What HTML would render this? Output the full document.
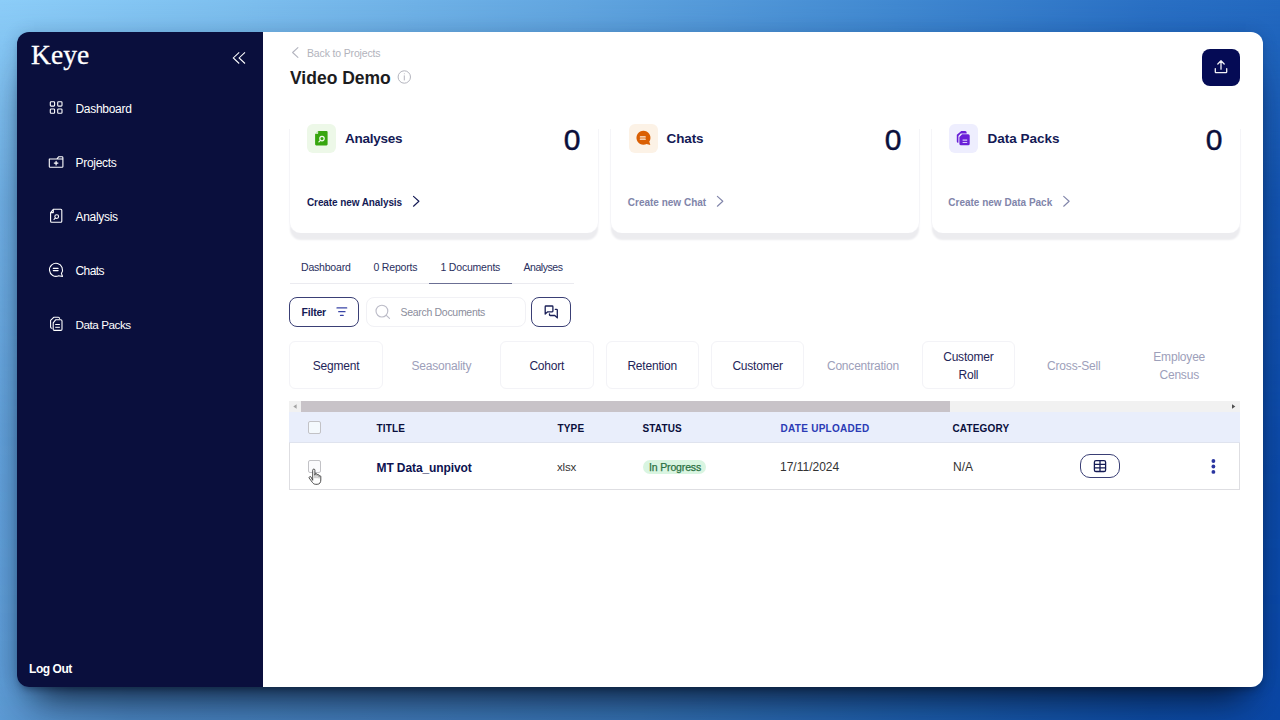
<!DOCTYPE html>
<html lang="en">
<head>
<meta charset="utf-8">
<title>Keye - Video Demo</title>
<style>
*{box-sizing:border-box;margin:0;padding:0}
html,body{width:1280px;height:720px;overflow:hidden}
body{position:relative;font-family:"Liberation Sans",sans-serif;background:#3c7fc9;color:#0a0f3c}
.abs{position:absolute}
.t{position:absolute;white-space:pre;line-height:1}
svg{position:absolute;overflow:visible}

/* wallpaper */
.bg-a{left:0;top:0;width:1280px;height:720px;background:linear-gradient(90deg,#8ccdf8 0%,#7cbeee 20%,#62a6e0 45%,#4189d1 70%,#2a70c4 90%,#2369c0 100%)}
.bg-b{left:0;top:0;width:1280px;height:720px;background:linear-gradient(90deg,#5c9ad4 0%,#5591cb 3%,#4a85c0 10%,#427bb8 28%,#3470b0 50%,#1c5caa 72%,#0d4ba3 90%,#0a47a6 100%);-webkit-mask-image:linear-gradient(180deg,rgba(0,0,0,0) 0%,rgba(0,0,0,.15) 6%,rgba(0,0,0,.62) 28%,rgba(0,0,0,.88) 60%,#000 100%);mask-image:linear-gradient(180deg,rgba(0,0,0,0) 0%,rgba(0,0,0,.15) 6%,rgba(0,0,0,.62) 28%,rgba(0,0,0,.88) 60%,#000 100%)}

/* window */
.win-shadow{left:17px;top:32px;width:1246px;height:655px;border-radius:12px;box-shadow:0 27px 36px -17px rgba(5,15,35,.88),0 5px 6px -3px rgba(8,20,45,.38),0 0 16px 0 rgba(10,30,70,.16)}
.sidebar{left:17px;top:32px;width:246px;height:655px;background:#0a0f3d;border-radius:12px 0 0 12px}
.main{left:263px;top:32px;width:1000px;height:655px;background:#fff;border-radius:0 12px 12px 0}

/* sidebar */
.logo{font-family:"Liberation Serif",serif;font-size:27.5px;color:#fff;left:31px;top:41px;letter-spacing:.1px;-webkit-text-stroke:.3px #fff}
.nav{font-size:12px;color:#fff;left:75.5px;letter-spacing:-.3px}
.logout{font-size:12px;font-weight:700;color:#fff;left:29px;top:663px;letter-spacing:-.45px}

/* header */
.back{font-size:10.5px;color:#b2b3bc;left:307px;top:48px;letter-spacing:-.15px}
.h1{font-size:17.5px;font-weight:700;color:#1c1c1e;left:290px;top:70px}
.upload{left:1202px;top:49px;width:38px;height:37px;border-radius:8px;background:#050b55}

/* cards */
.card{top:129px;width:310px;height:103.5px;background:#fff;border-radius:0 0 12px 12px;border-left:1px solid #f5f5f8;border-right:1px solid #f5f5f8;box-shadow:0 8px 2px -1px #ececef}
.ibox{top:123.5px;width:29px;height:29px;border-radius:6px}
.ctitle{font-size:13.5px;font-weight:700;color:#141a55;top:132.3px;letter-spacing:-.25px}
.cnum{font-size:30px;color:#0a0f3c;top:125.2px;-webkit-text-stroke:.45px #0a0f3c}
.clink{font-size:10px;font-weight:700;top:197.8px;color:#141a55}
.clink.off{color:#8185aa}

/* tabs */
.tab{font-size:10.5px;color:#2a2f5e;top:262.4px;letter-spacing:-.2px}
.tabline{left:290px;top:283px;width:284px;height:1px;background:#ebebf0}
.tabactive{left:428.5px;top:282.5px;width:83.5px;height:1.5px;background:#6b6f94}

/* toolbar */
.btn{border:1px solid #3a3f75;border-radius:8px;background:#fff}
.filtertxt{font-size:10.5px;font-weight:700;color:#141a55;left:301.5px;top:307.1px;letter-spacing:-.2px}
.search{left:365.5px;top:297px;width:160px;height:29.5px;border:1px solid #f1f1f5;border-radius:8px}
.searchtxt{font-size:10.5px;color:#8b8d9c;left:400.5px;top:307.4px;letter-spacing:-.3px}

/* chips */
.chip{top:341px;width:93.5px;height:47.5px;border:1px solid #f3f3f7;border-radius:6px}
.chiptxt{position:absolute;font-size:12px;color:#1f2559;text-align:center;width:105.4px;line-height:17.5px;letter-spacing:-.2px}
.chiptxt.one{top:358px}
.chiptxt.two{top:349px}
.chiptxt.off{color:#9da0ba}

/* scrollbar */
.sb-track{left:289px;top:401.3px;width:950.5px;height:10.5px;background:#f1f1f1}
.sb-thumb{left:301.3px;top:401.3px;width:648.7px;height:10.5px;background:#c8c3c8}

/* table */
.thead{left:289px;top:411.5px;width:950.5px;height:31px;background:#e9eefb;border-bottom:1px solid #dfe3ee}
.trow{left:289px;top:442.5px;width:950.5px;height:47px;border:1px solid #dedee2;border-top:none;background:#fff}
.th{font-size:10px;font-weight:700;color:#0a0f3c;top:424px;letter-spacing:.15px}
.td{font-size:12px;color:#333;top:461px}
.cb{width:13px;height:13px;border:1px solid #c2c2c6;border-radius:2px;background:#fbfbfd;left:308.2px}
.badge{left:643px;top:459.5px;width:63.3px;height:14.8px;border-radius:7.4px;background:#d9f5e1}
.badgetxt{font-size:10.5px;color:#2b7042;left:649px;top:462.4px;letter-spacing:-.15px;-webkit-text-stroke:.25px #2b7042}
.pill{left:1080px;top:454px;width:40px;height:24px;border:1px solid #3a3f75;border-radius:10px;background:#fff}
</style>
</head>
<body>
<!-- wallpaper -->
<div class="abs bg-a"></div>
<div class="abs bg-b"></div>

<!-- window -->
<div class="abs win-shadow"></div>
<div class="abs sidebar"></div>
<div class="abs main"></div>

<!-- sidebar content -->
<div class="t logo">Keye</div>
<div class="t nav" style="top:103px">Dashboard</div>
<div class="t nav" style="top:157px">Projects</div>
<div class="t nav" style="top:211px">Analysis</div>
<div class="t nav" style="top:265px;letter-spacing:-.6px">Chats</div>
<div class="t nav" style="top:319px;font-size:11.7px;letter-spacing:-.45px">Data Packs</div>
<div class="t logout">Log Out</div>
<!-- sidebar icons -->
<svg style="left:230px;top:50px" width="18" height="16" viewBox="230 50 18 16" fill="none" stroke="#fff" stroke-width="1.05" stroke-linecap="butt" stroke-linejoin="miter"><path d="M239.200 52.300 233.300 57.900l5.900 5.600M245 52.300l-5.900 5.600 5.900 5.600"/></svg>
<svg style="left:48px;top:100px" width="16" height="16" viewBox="48 100 16 16" fill="none" stroke="#fff" stroke-width="1.1"><rect x="50.3" y="101.8" width="4.3" height="4.3" rx=".8"/><rect x="57.7" y="101.8" width="4.3" height="4.3" rx=".8"/><rect x="50.3" y="109" width="4.3" height="4.3" rx=".8"/><rect x="57.7" y="109" width="4.3" height="4.3" rx=".8"/></svg>
<svg style="left:47px;top:154px" width="18" height="16" viewBox="47 154 18 16" fill="none" stroke="#fff" stroke-width="1.1" stroke-linejoin="round" stroke-linecap="round"><path d="M49.3 159h13.6v7.4a.9.9 0 0 1-.9.9H50.200a.9.9 0 0 1-.9-.9zM56.800 159l1.800-2.200h3.400a.9.9 0 0 1 .9.900V159"/><path d="M56.100 161.300v3.600M54.300 163.100h3.600" stroke-width="1.2"/></svg>
<svg style="left:48px;top:207px" width="16" height="18" viewBox="48 207 16 18" fill="none" stroke="#fff" stroke-width="1.1" stroke-linejoin="round" stroke-linecap="round"><path d="M53.300 209.300h7.500a1 1 0 0 1 1 1v11a1 1 0 0 1-1 1h-9.200a1 1 0 0 1-1-1v-8.700zM50.600 212.600h2.700v-3.300"/><circle cx="56.700" cy="216.600" r="1.900"/><path d="M55.300 218.100l-1.300 1.300"/></svg>
<svg style="left:47px;top:261px" width="18" height="18" viewBox="47 261 18 18" fill="none" stroke="#fff" stroke-width="1.1" stroke-linejoin="round" stroke-linecap="round"><path d="M62.500 276.500l-1.100-3.100a6.500 6.500 0 1 0-2.700 2.300z"/><path d="M53.300 268.300h4.800M53.300 270.600h4.800" stroke-width="1.2"/></svg>
<svg style="left:48px;top:315px" width="16" height="18" viewBox="48 315 16 18" fill="none" stroke="#fff" stroke-width="1.1" stroke-linejoin="round" stroke-linecap="round"><path d="M55.600 319.800h5.200a1.200 1.200 0 0 1 1.200 1.200v8.200a1.200 1.200 0 0 1-1.200 1.200h-6.400a1.200 1.200 0 0 1-1.200-1.200v-6.400z"/><path d="M51.800 328.300a1.300 1.300 0 0 1-1.200-1.300v-6.600l3.100-3.100h4.600a1.300 1.300 0 0 1 1.300 1.100"/><path d="M55.600 324.500h3.900M55.600 327.300h3.900" stroke-width="1"/></svg>


<!-- header -->
<div class="t back">Back to Projects</div>
<div class="t h1">Video Demo</div>
<div class="abs upload"></div>
<!-- header icons -->
<svg style="left:290px;top:46px" width="10" height="14" viewBox="290 46 10 14" fill="none" stroke="#b3b4bf" stroke-width="1.1" stroke-linecap="round" stroke-linejoin="round"><path d="M297.9 47.600 292.600 52.500l5.300 4.900"/></svg>
<svg style="left:396px;top:69px" width="16" height="16" viewBox="396 69 16 16" fill="none" stroke="#b4b5be" stroke-width="1"><circle cx="404.300" cy="77" r="6.200"/><path d="M404.300 75.800v4.200" stroke-linecap="round"/><circle cx="404.300" cy="73.700" r=".5" fill="#b4b5be" stroke="none"/></svg>
<svg style="left:1211px;top:58px" width="20" height="18" viewBox="1211 58 20 18" fill="none" stroke="#f2f2f6" stroke-width="1.3" stroke-linecap="round" stroke-linejoin="round"><path d="M1215.300 68.600v3.300a.8.800 0 0 0 .8.800h9.800a.8.800 0 0 0 .8-.8v-3.300"/><path d="M1221 69.200v-8.200M1217.800 64l3.200-3.200 3.200 3.200"/></svg>

<!-- summary cards -->
<div class="abs card" style="left:288.8px"></div>
<div class="abs card" style="left:609.8px"></div>
<div class="abs card" style="left:930.8px"></div>

<div class="abs ibox" style="left:307px;background:#edf8e8"></div>
<svg style="left:314px;top:130px" width="15" height="16" viewBox="314 130 15 16"><path d="M318.400 131h8.100a1.100 1.100 0 0 1 1.100 1.100v12.200a1.100 1.100 0 0 1-1.100 1.100h-10.300a1.100 1.100 0 0 1-1.100-1.100v-10z" fill="#37a60f"/><path d="M315.600 133.900l2.500-.1.100-2.400z" fill="#edf8e8"/><circle cx="322" cy="138.600" r="2.200" fill="none" stroke="#f3fbef" stroke-width="1.200"/><path d="M320.400 140.300l-1.500 1.500" stroke="#f3fbef" stroke-width="1.200" stroke-linecap="round"/></svg>
<div class="t ctitle" style="left:345px">Analyses</div>
<div class="t cnum" style="right:699.5px">0</div>
<div class="t clink" style="left:307px;letter-spacing:-.1px">Create new Analysis</div>
<svg style="left:411px;top:194px" width="10" height="14" viewBox="411 194 10 14" fill="none" stroke="#141a55" stroke-width="1.150" stroke-linecap="round" stroke-linejoin="round"><path d="M413.500 196.400l5.400 4.900-5.400 4.900"/></svg>

<div class="abs ibox" style="left:628.600px;background:#fcf2e6"></div>
<svg style="left:634px;top:129px" width="18" height="18" viewBox="634 129 18 18"><path d="M650.300 144.900l-1-3.300a7 7 0 1 0-2.700 2.400z" fill="#da5f03"/><path d="M640.400 136.900h4.800M640.400 139.200h4.800" stroke="#fdf3e8" stroke-width="1.300" stroke-linecap="round"/></svg>
<div class="t ctitle" style="left:666.500px;letter-spacing:-.1px">Chats</div>
<div class="t cnum" style="right:378.5px">0</div>
<div class="t clink off" style="left:627.800px">Create new Chat</div>
<svg style="left:715px;top:194px" width="10" height="14" viewBox="715 194 10 14" fill="none" stroke="#8185aa" stroke-width="1.150" stroke-linecap="round" stroke-linejoin="round"><path d="M717.400 196.400l5.400 4.900-5.400 4.900"/></svg>

<div class="abs ibox" style="left:948.700px;background:#eeeefe"></div>
<svg style="left:955px;top:129px" width="17" height="18" viewBox="955 129 17 18"><path d="M961.300 131.100h3.800a1.600 1.600 0 0 1 1.600 1.600v.8h-5.900l-2.400 2.500v6.700h-.4a1.200 1.200 0 0 1-1.200-1.200v-6.700z" fill="#6a20d7"/><path d="M962.100 134.300h6.100a1.500 1.500 0 0 1 1.500 1.500v8a1.500 1.500 0 0 1-1.500 1.500h-7.300a1.500 1.500 0 0 1-1.500-1.500v-6.700z" fill="#6a20d7"/><path d="M962.600 140.200h4.600M962.600 142.500h4.600" stroke="#d9c8fb" stroke-width="1.200"/></svg>
<div class="t ctitle" style="left:987.500px;letter-spacing:0">Data Packs</div>
<div class="t cnum" style="right:57.5px">0</div>
<div class="t clink off" style="left:948.300px">Create new Data Pack</div>
<svg style="left:1061px;top:194px" width="10" height="14" viewBox="1061 194 10 14" fill="none" stroke="#8185aa" stroke-width="1.150" stroke-linecap="round" stroke-linejoin="round"><path d="M1063.700 196.400l5.400 4.900-5.400 4.900"/></svg>

<!-- tabs -->
<div class="t tab" style="left:301px">Dashboard</div>
<div class="t tab" style="left:373.500px">0 Reports</div>
<div class="t tab" style="left:440.500px">1 Documents</div>
<div class="t tab" style="left:523.500px;letter-spacing:-.45px">Analyses</div>
<div class="abs tabline"></div>
<div class="abs tabactive"></div>

<!-- toolbar -->
<div class="abs btn" style="left:289px;top:297px;width:70px;height:30px"></div>
<div class="t filtertxt">Filter</div>
<svg style="left:335px;top:306px" width="14" height="12" viewBox="335 306 14 12" fill="none" stroke="#3944a6" stroke-width="1.250" stroke-linecap="round"><path d="M337 307.900h9.700M338.700 311.700h6.300M340.500 315.400h2.700"/></svg>
<div class="abs search"></div>
<svg style="left:374px;top:303px" width="18" height="18" viewBox="374 303 18 18" fill="none" stroke="#bcbcc8" stroke-width="1.150" stroke-linecap="round"><circle cx="381.900" cy="311.100" r="5.900"/><path d="M386.300 315.300l3.200 3"/></svg>
<div class="t searchtxt">Search Documents</div>
<div class="abs btn" style="left:531.300px;top:297px;width:39.300px;height:30px"></div>
<svg style="left:543px;top:304px" width="17" height="16" viewBox="543 304 17 16" fill="none" stroke="#1a1f57" stroke-width="1.300" stroke-linejoin="round" stroke-linecap="round"><path d="M545.200 314v-7.300a.7.700 0 0 1 .7-.7h6.300a.7.700 0 0 1 .7.700v4.400a.7.700 0 0 1-.7.700h-4.500z"/><path d="M555.300 309.300h1.300a.7.700 0 0 1 .7.700v7.900l-2.500-2.400h-4.600a.7.700 0 0 1-.7-.7v-1"/></svg>

<!-- analysis chips -->
<div class="abs chip" style="left:289.300px"></div>
<div class="abs chip" style="left:500.100px"></div>
<div class="abs chip" style="left:605.500px"></div>
<div class="abs chip" style="left:710.900px"></div>
<div class="abs chip" style="left:921.700px"></div>
<div class="chiptxt one" style="left:283.300px">Segment</div>
<div class="chiptxt one off" style="left:388.700px">Seasonality</div>
<div class="chiptxt one" style="left:494.100px">Cohort</div>
<div class="chiptxt one" style="left:599.500px">Retention</div>
<div class="chiptxt one" style="left:704.900px">Customer</div>
<div class="chiptxt one off" style="left:810.300px">Concentration</div>
<div class="chiptxt two" style="left:915.700px">Customer<br>Roll</div>
<div class="chiptxt one off" style="left:1021.100px">Cross-Sell</div>
<div class="chiptxt two off" style="left:1126.500px">Employee<br>Census</div>

<!-- horizontal scrollbar -->
<div class="abs sb-track"></div>
<div class="abs sb-thumb"></div>
<svg style="left:291px;top:402px" width="8" height="9" viewBox="291 402 8 9"><path d="M296.600 404.200v4.600l-3.300-2.300z" fill="#a3a3a3"/></svg>
<svg style="left:1230px;top:402px" width="8" height="9" viewBox="1230 402 8 9"><path d="M1232 404.200v4.600l3.300-2.300z" fill="#505050"/></svg>

<!-- documents table -->
<div class="abs thead"></div>
<div class="abs trow"></div>
<div class="abs cb" style="top:421.200px;background:#f4f9fd"></div>
<div class="t th" style="left:376.500px">TITLE</div>
<div class="t th" style="left:557.500px">TYPE</div>
<div class="t th" style="left:642.500px">STATUS</div>
<div class="t th" style="left:780.5px;color:#2b3bb5;letter-spacing:.28px">DATE UPLOADED</div>
<div class="t th" style="left:952.500px">CATEGORY</div>

<div class="abs cb" style="top:460.200px"></div>
<div class="t td" style="left:376.500px;top:461.6px;font-weight:700;color:#0d1250;letter-spacing:-.1px">MT Data_unpivot</div>
<div class="t td" style="left:557px;font-size:11.500px;letter-spacing:-.2px;top:461.500px">xlsx</div>
<div class="abs badge"></div>
<div class="t badgetxt">In Progress</div>
<div class="t td" style="left:780px">17/11/2024</div>
<div class="t td" style="left:953px">N/A</div>
<div class="abs pill"></div>
<svg style="left:1092px;top:458px" width="16" height="16" viewBox="1092 458 16 16" fill="none" stroke="#141a55" stroke-width="1.300"><rect x="1094.400" y="460.600" width="11.200" height="10.900" rx="1.600"/><path d="M1100 460.600v10.900M1094.400 464.300h11.200M1094.400 467.900h11.200"/></svg>
<svg style="left:1210px;top:458px" width="7" height="17" viewBox="1210 458 7 17" fill="#2a35a0"><circle cx="1213.400" cy="461" r="1.900"/><circle cx="1213.400" cy="466.500" r="1.900"/><circle cx="1213.400" cy="471.900" r="1.900"/></svg>

<!-- mouse pointer (hand) -->
<svg style="left:307px;top:467px" width="16" height="19" viewBox="307 467 16 19"><path d="M312.700 480.300v-10.100a1.100 1.100 0 0 1 2.200 0v5.200l.100-1a1 1 0 0 1 2 .2v.8a1 1 0 0 1 2 .2v.9a.900.900 0 0 1 1.800.2v3.300c0 2.200-1 4.300-3.600 4.300h-1.400c-1.700 0-2.600-.8-3.400-1.900l-3.200-4.300a1.100 1.100 0 0 1 1.700-1.300z" fill="#fff" stroke="#3a3a3a" stroke-width=".9" stroke-linejoin="round"/><path d="M315 476v2.200M317 476.200v2M319 477v1.400" stroke="#555" stroke-width=".55"/></svg>


</body>
</html>
